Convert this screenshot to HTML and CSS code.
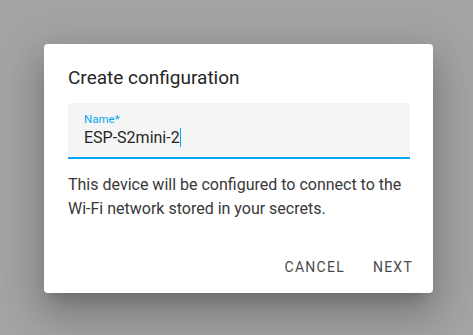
FILE: index.html
```html
<!DOCTYPE html>
<html>
<head>
<meta charset="utf-8">
<link rel="stylesheet" href="styles.css">
</head>
<body>
<div class="scrim">
  <div class="dialog">
    <h2 class="title">Create configuration</h2>
    <div class="content">
      <div class="field">
        <span class="label">Name*</span>
        <span class="value">ESP-S2mini-2<span class="caret"></span></span>
      </div>
      <p class="desc">This device will be configured to connect to the Wi-Fi network stored in your secrets.</p>
    </div>
    <div class="actions">
      <button class="btn">Cancel</button>
      <button class="btn">Next</button>
    </div>
  </div>
</div>
</body>
</html>
```

FILE: styles.css
```css
html, body {
  margin: 0;
  padding: 0;
}
body {
  width: 473px;
  height: 335px;
  background: #a4a4a4;
  font-family: Roboto, "Noto Sans", sans-serif;
  overflow: hidden;
}
.scrim {
  padding: 44px 0 0 44px;
}
.dialog {
  width: 389px;
  height: 249px;
  box-sizing: border-box;
  background: #fff;
  border-radius: 4px;
  box-shadow: 0 11px 15px -7px rgba(0,0,0,.2), 0 24px 38px 3px rgba(0,0,0,.14), 0 9px 46px 8px rgba(0,0,0,.12);
  display: flex;
  flex-direction: column;
}
.title {
  margin: 0;
  padding: 22px 24px 0 24px;
  font-size: 19px;
  font-weight: 400;
  line-height: 24px;
  color: #262626;
}
.content {
  padding: 13px 23px 0 24px;
  flex: 1;
}
.field {
  height: 56px;
  box-sizing: border-box;
  background: #f5f5f5;
  border-radius: 4px 4px 0 0;
  border-bottom: 2px solid #03a9f4;
  padding: 9px 16px 0 16px;
  display: flex;
  flex-direction: column;
}
.label {
  font-size: 11.5px;
  line-height: 14px;
  color: #03a9f4;
}
.value {
  font-size: 16px;
  line-height: 24px;
  color: #262626;
}
.caret {
  display: inline-block;
  width: 1px;
  height: 19px;
  background: #03a9f4;
  vertical-align: -4px;
}
.desc {
  margin: 14px 0 0 0;
  font-size: 16px;
  line-height: 24px;
  color: #383838;
}
.actions {
  display: flex;
  justify-content: flex-end;
  gap: 12px;
  padding: 8px 12px 8px 8px;
}
.btn {
  font-family: Roboto, "Noto Sans", sans-serif;
  height: 36px;
  padding: 0 8px;
  border: 0;
  background: transparent;
  text-transform: uppercase;
  font-size: 14px;
  font-weight: 400;
  letter-spacing: 1.25px;
  color: #4a4a4a;
}
```
